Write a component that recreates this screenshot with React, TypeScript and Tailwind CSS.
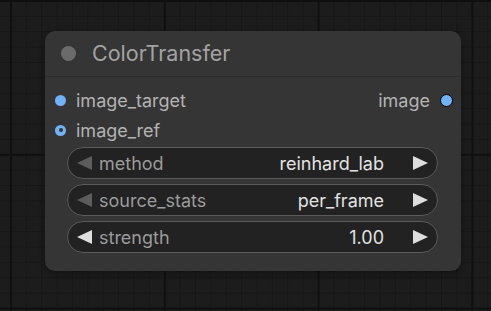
const inputs = [
  { name: "image_target", output: "image", ring: false },
  { name: "image_ref", output: "", ring: true },
];

const widgets = [
  { label: "method", value: "reinhard_lab", leftOn: false },
  { label: "source_stats", value: "per_frame", leftOn: false },
  { label: "strength", value: "1.00", leftOn: true },
];

function Arrow({ dir, on }: { dir: "l" | "r"; on: boolean }) {
  return (
    <svg width="15" height="14" viewBox="0 0 15 14" className="shrink-0">
      <polygon points={dir === "l" ? "15,0 15,14 0,7" : "0,0 0,14 15,7"} fill={on ? "#dedede" : "#5c5c5c"} />
    </svg>
  );
}

function Widget({ label, value, leftOn }: { label: string; value: string; leftOn: boolean }) {
  return (
    <div className="flex h-[32px] items-center rounded-full border border-[#5a5a5a] bg-[#222222] px-[9px] text-[18px]">
      <Arrow dir="l" on={leftOn} />
      <span className="ml-[7px] text-[#9b9b9b]">{label}</span>
      <span className="ml-auto text-[#e2e2e2]">{value}</span>
      <span className="ml-[29px]">
        <Arrow dir="r" on />
      </span>
    </div>
  );
}

export default function App() {
  return (
    <div className="h-[311px] w-full overflow-hidden bg-[#1c1c1c] bg-[image:linear-gradient(to_right,#101010_2px,transparent_2px),linear-gradient(to_bottom,#101010_2px,transparent_2px),linear-gradient(to_right,#161616_1px,transparent_1px),linear-gradient(to_bottom,#161616_1px,transparent_1px)] bg-[size:153.8px_153.8px,153.8px_153.8px,15.38px_15.38px,15.38px_15.38px] bg-[position:10px_0px,10px_0px,10.5px_0.5px,10.5px_0.5px] pl-[45px] pt-[31px] font-['Inter','Liberation_Sans',sans-serif]">
      <div className="w-[416px] rounded-[10px] bg-[#353535] shadow-[0_2px_6px_rgba(0,0,0,0.35)]">
        <div className="flex h-[46px] items-center border-b border-[#2d2d2d] pl-[16px]">
          <span className="h-[15px] w-[15px] rounded-full bg-[#6b6b6b]" />
          <span className="ml-[16px] text-[21.5px] text-[#a3a3a3]">ColorTransfer</span>
        </div>
        <div className="pt-[8px]">
          {inputs.map((s) => (
            <div key={s.name} className="flex h-[30px] items-center pl-[10px] pr-[8px] text-[18px]">
              {s.ring ? (
                <span className="flex h-[11px] w-[11px] items-center justify-center rounded-full bg-[#70b2f5]">
                  <span className="h-[4px] w-[4px] rounded-full bg-[#353535]" />
                </span>
              ) : (
                <span className="h-[11px] w-[11px] rounded-full bg-[#70b2f5]" />
              )}
              <span className="ml-[10px] text-[#b3b3b3]">{s.name}</span>
              {s.output && (
                <>
                  <span className="ml-auto text-[#b3b3b3]">{s.output}</span>
                  <span className="ml-[10px] h-[13px] w-[13px] rounded-full border-[1.5px] border-black bg-[#70b2f5]" />
                </>
              )}
            </div>
          ))}
        </div>
        <div className="flex flex-col gap-[5px] pb-[18px] pl-[22px] pr-[23px] pt-[2px]">
          {widgets.map((w) => (
            <Widget key={w.label} {...w} />
          ))}
        </div>
      </div>
    </div>
  );
}
